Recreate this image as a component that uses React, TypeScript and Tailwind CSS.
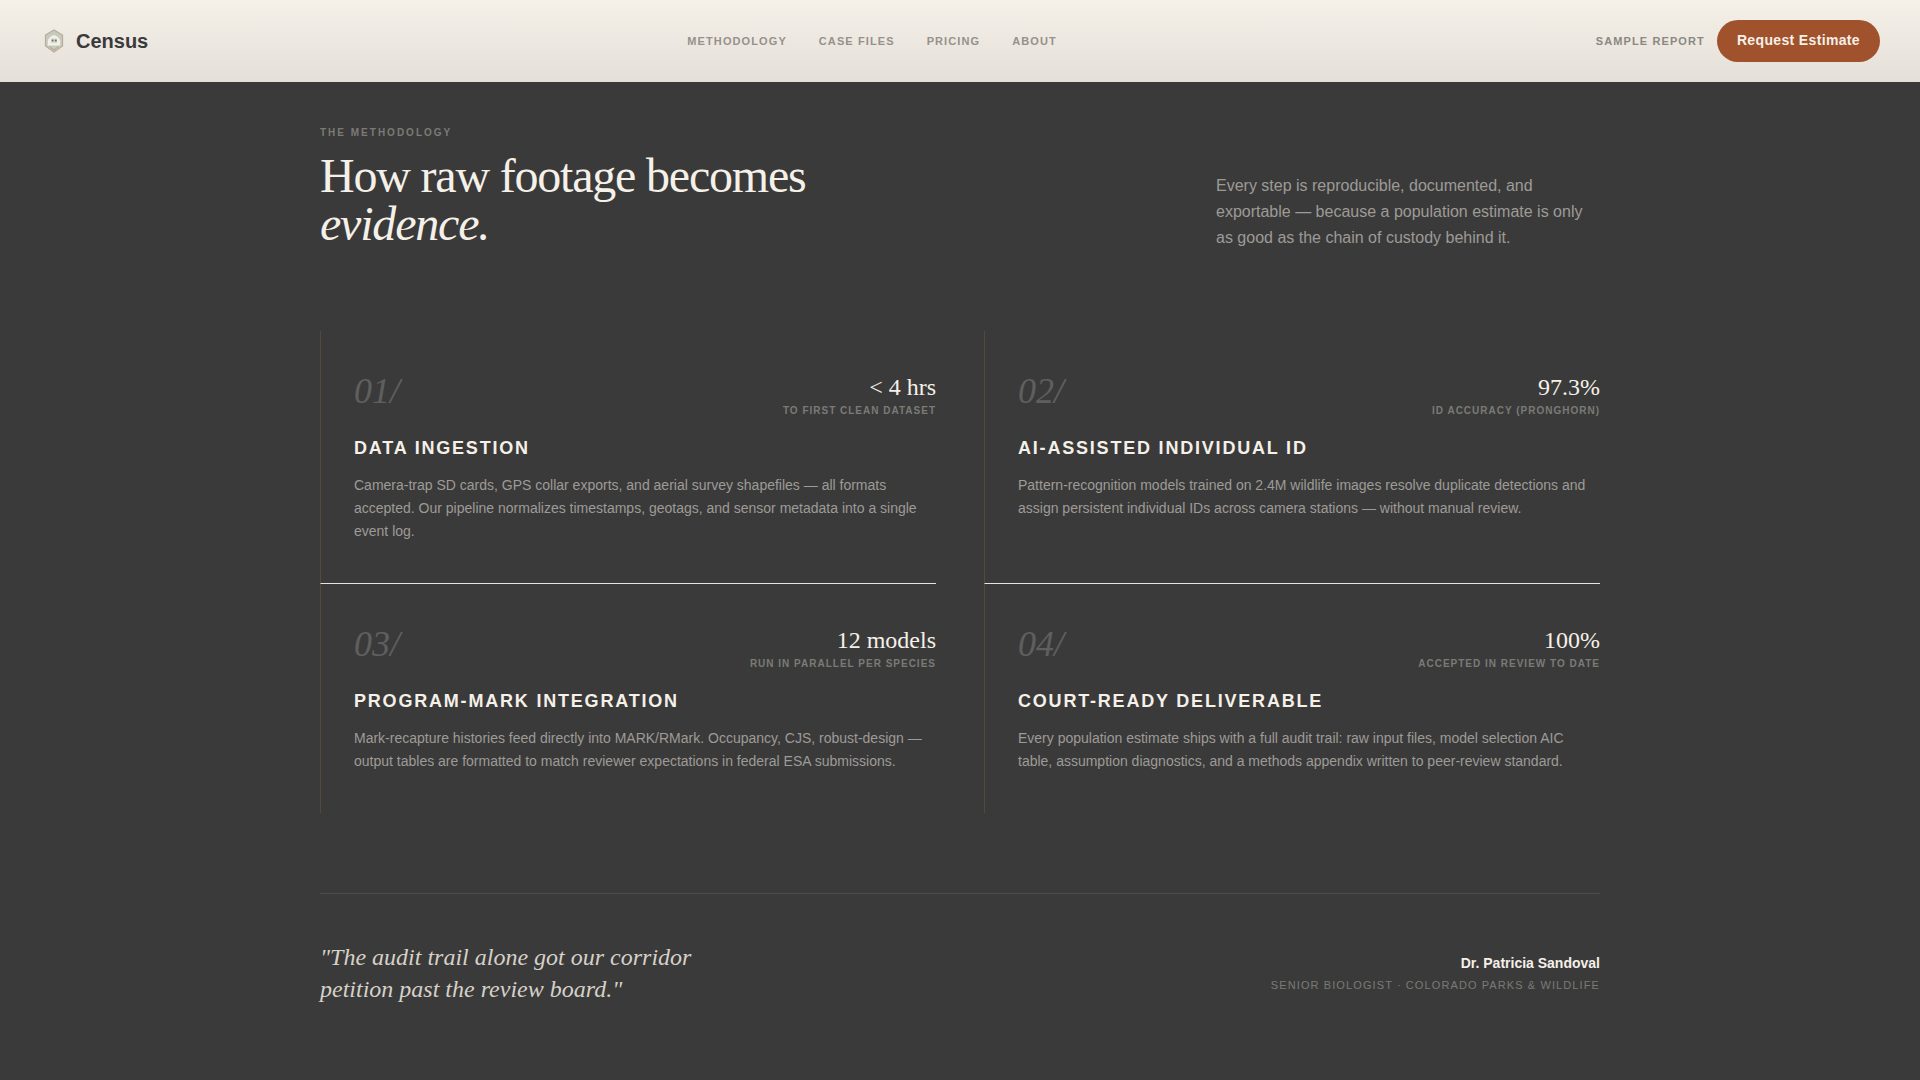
const NAV_LINKS = ["Methodology", "Case Files", "Pricing", "About"]

const STEPS = [
  {
    num: "01/",
    stat: "< 4 hrs",
    statLabel: "To first clean dataset",
    title: "Data Ingestion",
    body: "Camera-trap SD cards, GPS collar exports, and aerial survey shapefiles — all formats accepted. Our pipeline normalizes timestamps, geotags, and sensor metadata into a single event log.",
  },
  {
    num: "02/",
    stat: "97.3%",
    statLabel: "ID accuracy (pronghorn)",
    title: "AI-Assisted Individual ID",
    body: "Pattern-recognition models trained on 2.4M wildlife images resolve duplicate detections and assign persistent individual IDs across camera stations — without manual review.",
  },
  {
    num: "03/",
    stat: "12 models",
    statLabel: "Run in parallel per species",
    title: "Program-Mark Integration",
    body: "Mark-recapture histories feed directly into MARK/RMark. Occupancy, CJS, robust-design — output tables are formatted to match reviewer expectations in federal ESA submissions.",
  },
  {
    num: "04/",
    stat: "100%",
    statLabel: "Accepted in review to date",
    title: "Court-Ready Deliverable",
    body: "Every population estimate ships with a full audit trail: raw input files, model selection AIC table, assumption diagnostics, and a methods appendix written to peer-review standard.",
  },
]

function Logo() {
  return (
    <svg width="20" height="24" viewBox="0 0 20 24" fill="none">
      <path d="M10 1 L18.5 6 V17 L10 23 L1.5 17 V6 Z" fill="#c8cabd" stroke="#b8ac9b" strokeWidth="1.2" />
      <path d="M3.8 11 Q10 1.5 16.2 11 V16.5 H3.8 Z" fill="#f0efe9" />
      <path d="M7 9.5 H13 V14 H7 Z" fill="#d6d4ca" />
      <circle cx="8.6" cy="11.5" r="1" fill="#6f6a60" />
      <circle cx="11.8" cy="11.5" r="1" fill="#6f6a60" />
      <path d="M5.5 17.5 L10 21 L14.5 17.5" stroke="#bd9a84" strokeWidth="1" />
    </svg>
  )
}

function StepCard({ step, last }: { step: (typeof STEPS)[number]; last: boolean }) {
  return (
    <div className={`border-l border-[#55483f] pl-[33px] pt-[40px] ${last ? "pb-[40px]" : "border-b border-b-[#e8e3da] pb-[41px]"}`}>
      <div className="flex items-start justify-between">
        <span className="font-['Liberation_Serif',serif] text-[36px] italic leading-[40px] text-[#5f5f5f]">{step.num}</span>
        <div className="text-right">
          <p className="font-['Liberation_Serif',serif] text-[24px] leading-[32px] text-[#f5f0e8]">{step.stat}</p>
          <p className="text-[10px] font-bold uppercase leading-[15px] tracking-[0.1em] text-[#7b7a77]">{step.statLabel}</p>
        </div>
      </div>
      <h3 className="mt-[17px] text-[18px] font-bold uppercase leading-[27px] tracking-[0.1em] text-[#f5f0e8]">{step.title}</h3>
      <p className="mt-[12px] text-[14px] leading-[22.75px] text-[#9e9b97]">{step.body}</p>
    </div>
  )
}

export default function App() {
  return (
    <div className="min-h-[1080px] bg-[#3a3a3a] font-['Liberation_Sans',sans-serif]">
      <header className="flex h-[82px] items-center justify-between bg-gradient-to-b from-[#f5f0e8] to-[#e4dfd8] pl-[44px] pr-[40px]">
        <div className="flex items-center gap-[12px]">
          <Logo />
          <span className="text-[20px] font-bold leading-[30px] text-[#3a3a3a]">Census</span>
        </div>
        <nav className="flex items-center gap-[32px]">
          {NAV_LINKS.map((l) => (
            <span key={l} className="text-[11px] font-bold uppercase tracking-[0.1em] text-[#96918b]">{l}</span>
          ))}
        </nav>
        <div className="flex items-center gap-[12px]">
          <span className="text-[11px] font-bold uppercase tracking-[0.1em] text-[#8b8782]">Sample Report</span>
          <button className="h-[42px] rounded-full bg-[#a0522d] px-[20px] pb-[2px] text-[14px] font-bold tracking-[0.025em] text-[#f5f0e8]">Request Estimate</button>
        </div>
      </header>

      <main className="mx-auto w-[1280px] pt-[43px]">
        <div className="flex items-start justify-between">
          <div>
            <p className="text-[10px] font-bold uppercase leading-[15px] tracking-[0.2em] text-[#7b7a77]">The Methodology</p>
            <h1 className="mt-[12px] font-['Liberation_Serif',serif] text-[48px] leading-[48px] tracking-[-0.025em] text-[#f5f0e8]">
              How raw footage becomes
              <br />
              <em>evidence.</em>
            </h1>
          </div>
          <p className="mt-[48px] w-[384px] text-[16px] leading-[26px] text-[#9e9b97]">
            Every step is reproducible, documented, and exportable — because a population estimate is only as good as the chain of custody behind it.
          </p>
        </div>

        <div className="mt-[80px] grid grid-cols-2 gap-x-[48px]">
          {STEPS.map((s, i) => (
            <StepCard key={s.num} step={s} last={i > 1} />
          ))}
        </div>

        <div className="mt-[80px] flex items-center justify-between border-t border-[#4d4d4d] pt-[47px]">
          <p className="w-[420px] font-['Liberation_Serif',serif] text-[24px] italic leading-[32px] text-[#d6d1c8]">
            "The audit trail alone got our corridor petition past the review board."
          </p>
          <div className="text-right">
            <p className="pt-[1px] text-[14px] font-bold leading-[21px] text-[#f5f0e8]">Dr. Patricia Sandoval</p>
            <p className="mt-[3px] text-[11px] uppercase leading-[16px] tracking-[0.1em] text-[#7b7a77]">Senior Biologist · Colorado Parks &amp; Wildlife</p>
          </div>
        </div>
      </main>
    </div>
  )
}
